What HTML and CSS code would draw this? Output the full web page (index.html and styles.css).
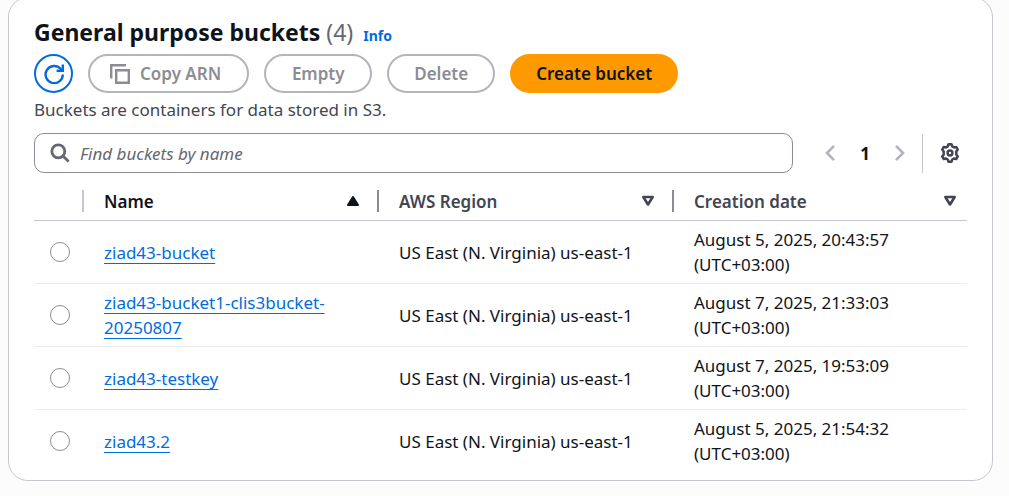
FILE: index.html
```html
<!DOCTYPE html>
<html lang="en">
<head>
<meta charset="utf-8">
<title>General purpose buckets</title>
<link rel="stylesheet" href="styles.css">
</head>
<body>
<main class="card">
  <header class="header">
    <div class="heading">
      <h1 class="title">General purpose buckets <span class="count">(4)</span></h1>
      <a class="info" href="#info">Info</a>
    </div>
    <div class="actions">
      <button class="btn btn-icon" type="button" aria-label="Refresh">
        <svg class="icon" viewBox="0 0 20 20" fill="none" stroke="currentColor" stroke-width="2.4"><path d="M18.800 10.500A8.600 8.600 0 1 1 16.600 4.800L18.500 6.700"/><path d="M18.800 0.500v6.200h-6.200"/></svg>
      </button>
      <button class="btn btn-copy" type="button" disabled>
        <svg class="icon" viewBox="0 0 20 20" fill="none" stroke="currentColor" stroke-width="2.4"><path d="M1.2 14.5V1.2H16"/><path d="M6.2 6.2h12.6v12.6H6.2z"/></svg>
        Copy ARN
      </button>
      <button class="btn" type="button" disabled>Empty</button>
      <button class="btn" type="button" disabled>Delete</button>
      <button class="btn btn-primary" type="button">Create bucket</button>
    </div>
    <p class="description">Buckets are containers for data stored in S3.</p>
  </header>

  <div class="tools">
    <label class="search">
      <svg class="search-icon" viewBox="0 0 20 20" fill="none" stroke="currentColor" stroke-width="2.8"><circle cx="8.3" cy="8.3" r="6.500"/><path d="M13 13l5.600 5.600"/></svg>
      <input class="search-input" type="search" placeholder="Find buckets by name" aria-label="Find buckets by name">
    </label>
    <nav class="pages" aria-label="Pagination">
      <button class="page-arrow" type="button" disabled aria-label="Previous page"><svg class="arrow" viewBox="0 0 10 18" fill="none" stroke="currentColor" stroke-width="2.6"><path d="M9 1.800L2 9l7 7.200"/></svg></button>
      <button class="page" type="button" aria-current="page">1</button>
      <button class="page-arrow" type="button" disabled aria-label="Next page"><svg class="arrow" viewBox="0 0 10 18" fill="none" stroke="currentColor" stroke-width="2.6"><path d="M1 1.800L8 9l-7 7.200"/></svg></button>
    </nav>
    <button class="settings" type="button" aria-label="Preferences">
      <svg class="icon" viewBox="0 0 20 20" fill="none" stroke="currentColor" stroke-width="2.5" stroke-linejoin="round"><path d="M7.700 3.500L8.500 1.300h3l.8 2.200 1.600.9 2.300-.4 1.600 2.600L16.300 8.500v3l1.500 1.900-1.600 2.600-2.300-.4-1.600.9-.8 2.200h-3l-.8-2.200-1.600-.9-2.300.4-1.600-2.600 1.500-1.900v-3L2.200 6.600 3.800 4l2.300.4z"/><circle cx="10" cy="10" r="2.400"/></svg>
    </button>
  </div>

  <table class="table">
    <thead>
      <tr>
        <th class="select-col" aria-label="Selection"></th>
        <th class="sorted" aria-sort="ascending"><div class="th"><span>Name</span><svg class="sort" viewBox="0 0 14 12"><path d="M7 2l5 8H2z" fill="currentColor" stroke="currentColor" stroke-width="2" stroke-linejoin="round"/></svg></div></th>
        <th><div class="th"><span>AWS Region</span><svg class="sort" viewBox="0 0 14 12"><path d="M2.300 2h9.400L7 9.500z" fill="none" stroke="currentColor" stroke-width="2.600" stroke-linejoin="round"/></svg></div></th>
        <th><div class="th"><span>Creation date</span><svg class="sort" viewBox="0 0 14 12"><path d="M2.300 2h9.400L7 9.500z" fill="none" stroke="currentColor" stroke-width="2.600" stroke-linejoin="round"/></svg></div></th>
      </tr>
    </thead>
    <tbody>
      <tr>
        <td class="select-col"><input class="radio" type="radio" name="bucket" aria-label="ziad43-bucket"></td>
        <td><a class="link" href="#b1">ziad43-bucket</a></td>
        <td>US East (N. Virginia) us-east-1</td>
        <td>August 5, 2025, 20:43:57 (UTC+03:00)</td>
      </tr>
      <tr>
        <td class="select-col"><input class="radio" type="radio" name="bucket" aria-label="ziad43-bucket1-clis3bucket-20250807"></td>
        <td><a class="link" href="#b2">ziad43-bucket1-clis3bucket-<wbr>20250807</a></td>
        <td>US East (N. Virginia) us-east-1</td>
        <td>August 7, 2025, 21:33:03 (UTC+03:00)</td>
      </tr>
      <tr>
        <td class="select-col"><input class="radio" type="radio" name="bucket" aria-label="ziad43-testkey"></td>
        <td><a class="link" href="#b3">ziad43-testkey</a></td>
        <td>US East (N. Virginia) us-east-1</td>
        <td>August 7, 2025, 19:53:09 (UTC+03:00)</td>
      </tr>
      <tr>
        <td class="select-col"><input class="radio" type="radio" name="bucket" aria-label="ziad43.2"></td>
        <td><a class="link" href="#b4">ziad43.2</a></td>
        <td>US East (N. Virginia) us-east-1</td>
        <td>August 5, 2025, 21:54:32 (UTC+03:00)</td>
      </tr>
    </tbody>
  </table>
</main>
</body>
</html>
```
FILE: styles.css
```css
* {
  box-sizing: border-box;
}

body {
  margin: 0;
  padding: 0 16px 0 8px;
  background: #fcfcfd;
  color: #0f141a;
  font: 400 17px/25px "Noto Sans", "Open Sans", sans-serif;
}

button,
input {
  font: inherit;
  color: inherit;
}

.card {
  margin-top: -3px;
  padding: 19px 25px 7px;
  background: #fff;
  border: 1px solid #c6c6cd;
  border-radius: 20px;
}

.heading {
  display: flex;
  align-items: baseline;
  gap: 10px;
}

.title {
  margin: 0;
  font-size: 23px;
  font-weight: 700;
  line-height: 30px;
}

.count {
  color: #656871;
  font-weight: 400;
}

.info {
  color: #006ce0;
  font-size: 14px;
  font-weight: 700;
  text-decoration: none;
}

.actions {
  display: flex;
  gap: 15px;
  margin-top: 6px;
}

.btn {
  display: flex;
  align-items: center;
  justify-content: center;
  gap: 10px;
  min-width: 108px;
  height: 39px;
  padding: 0 24px;
  border: 2px solid #b4b4bb;
  border-radius: 20px;
  background: #fff;
  color: #8c8c94;
  font-weight: 600;
  white-space: nowrap;
}

.btn-copy {
  padding: 0 26px 0 20px;
}

.btn-icon {
  width: 39px;
  min-width: 0;
  padding: 0;
  border-color: #006ce0;
  color: #006ce0;
}

.btn-primary {
  border-color: #ff9900;
  background: #ff9900;
  color: #0f141a;
}

.icon {
  width: 20px;
  height: 20px;
}

.description {
  margin: 4px 0 0;
  color: #424650;
}

.tools {
  display: flex;
  align-items: center;
  margin-top: 11px;
}

.search {
  display: flex;
  flex: 1;
  align-items: center;
  gap: 10px;
  height: 40px;
  padding: 0 15px;
  border: 1px solid #8c8c94;
  border-radius: 10px;
  color: #656871;
}

.search-icon {
  width: 20px;
  height: 20px;
}

.search-input {
  flex: 1;
  min-width: 0;
  padding: 0;
  border: 0;
  outline: 0;
  background: transparent;
}

.search-input::placeholder {
  color: #656871;
  font-style: italic;
  opacity: 1;
}

.pages {
  display: flex;
  align-items: center;
  gap: 10px;
  margin-left: 32px;
}

.page,
.page-arrow,
.settings {
  padding: 0;
  border: 0;
  background: none;
}

.page {
  width: 40px;
  font-weight: 700;
}

.page-arrow {
  display: flex;
  color: #b4b4bb;
}

.arrow {
  width: 10px;
  height: 18px;
}

.settings {
  display: flex;
  align-items: center;
  height: 39px;
  margin-left: 17px;
  padding: 0 7px 0 17px;
  border-left: 1px solid #c6c6cd;
  color: #424650;
}

.table {
  width: 100%;
  margin-top: 17px;
  border-collapse: collapse;
  table-layout: fixed;
}

.table th {
  padding: 0 0 8px;
  border-bottom: 1px solid #c6c6cd;
  color: #424650;
  font-weight: 600;
  text-align: left;
}

.table .sorted {
  color: #0f141a;
}

.th {
  display: flex;
  align-items: center;
  justify-content: space-between;
  height: 22px;
  padding: 0 17px 0 20px;
  border-left: 2px solid #8c8c94;
}

th:last-child .th {
  padding-right: 10px;
}

.sorted .th {
  border-color: #c6c6cd;
}

.sort {
  width: 14px;
  height: 12px;
}

.table td {
  height: 63px;
  padding: 6px 20px 6px 22px;
  border-bottom: 1px solid #ebebf0;
}

.table tr:last-child td {
  border-bottom: 0;
}

.table .select-col {
  width: 48px;
  padding: 0 0 0 16px;
}

.radio {
  display: block;
  width: 20px;
  height: 20px;
  margin: 0;
  border: 1px solid #8c8c94;
  border-radius: 50%;
  background: #fff;
  appearance: none;
}

.link {
  color: #006ce0;
  text-decoration: underline 1px;
  text-decoration-skip-ink: none;
  text-underline-offset: 4px;
}
```
